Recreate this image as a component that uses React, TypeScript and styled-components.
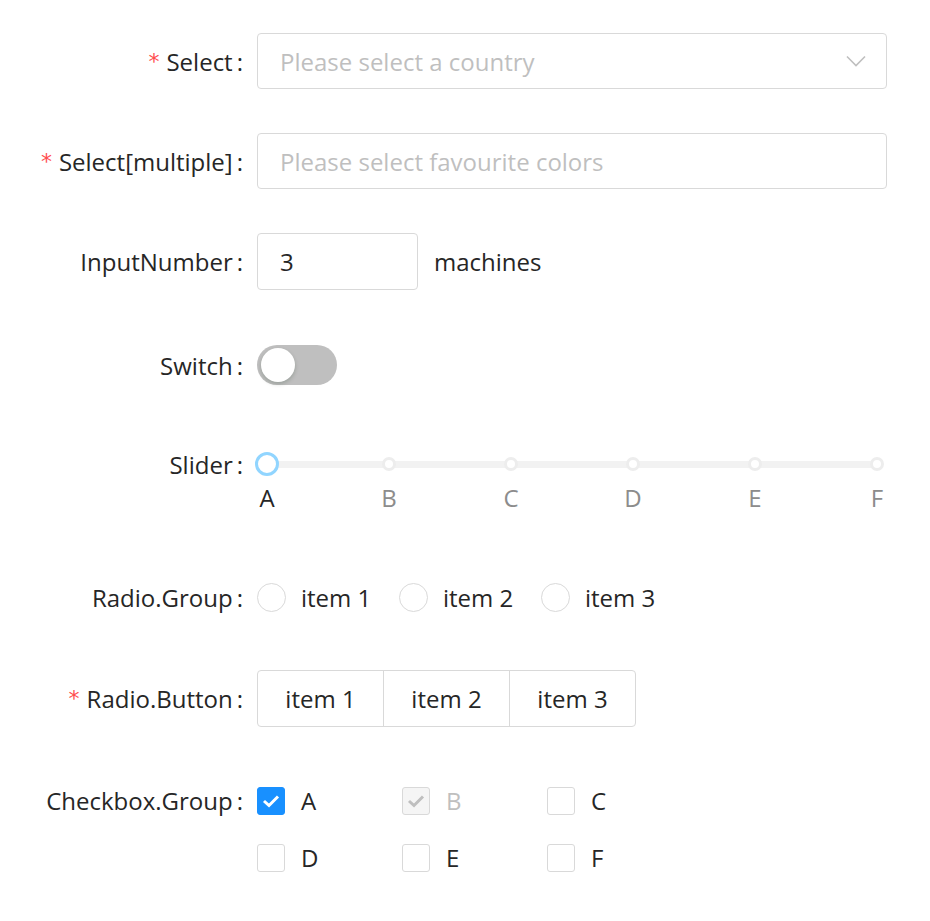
import React from "react";
import styled, { createGlobalStyle } from "styled-components";

const Global = createGlobalStyle`
  html, body { margin: 0; padding: 0; background: #fff; }
  body { font-family: "Open Sans", "Noto Sans", sans-serif; color: #262626; }
`;

const Form = styled.div`
  width: 930px;
  padding-top: 33px;
  font-size: 24px;
`;

const Item = styled.div<{ $mb: number }>`
  display: flex;
  align-items: flex-start;
  margin-bottom: ${(p) => p.$mb}px;
`;

const Label = styled.div`
  width: 257px;
  height: 56px;
  display: flex;
  align-items: center;
  justify-content: flex-end;
  color: #262626;
  white-space: nowrap;
  &::after {
    content: ":";
    margin: 0 14px 0 4px;
  }
`;

const Req = styled.span`
  color: #ff4d4f;
  font-family: "DejaVu Sans", sans-serif;
  font-size: 22px;
  margin-right: 7px;
`;

const Control = styled.div`
  width: 630px;
  min-height: 56px;
  display: flex;
  align-items: center;
`;

const SelectBox = styled.div`
  box-sizing: border-box;
  width: 100%;
  height: 56px;
  border: 1px solid #d9d9d9;
  border-radius: 4px;
  display: flex;
  align-items: center;
  justify-content: space-between;
  padding: 0 20px 0 22px;
`;

const Placeholder = styled.span`
  color: #bfbfbf;
`;

const NumberBox = styled.div`
  box-sizing: border-box;
  width: 161px;
  height: 57px;
  border: 1px solid #d9d9d9;
  border-radius: 4px;
  display: flex;
  align-items: center;
  padding-left: 22px;
`;

const Suffix = styled.span`
  margin-left: 16px;
`;

const SwitchTrack = styled.div`
  position: relative;
  width: 80px;
  height: 40px;
  border-radius: 20px;
  background: #bfbfbf;
`;

const SwitchKnob = styled.div`
  position: absolute;
  left: 4px;
  top: 3px;
  width: 34px;
  height: 34px;
  border-radius: 50%;
  background: #fff;
  box-shadow: 0 2px 4px rgba(0, 35, 11, 0.2);
`;

const SliderWrap = styled.div`
  position: relative;
  width: 610px;
  height: 56px;
  margin: 0 10px;
`;

const Rail = styled.div`
  position: absolute;
  left: 0;
  right: 0;
  top: 25px;
  height: 7px;
  border-radius: 4px;
  background: #f2f2f2;
`;

const Dot = styled.div`
  position: absolute;
  top: 28px;
  width: 14px;
  height: 14px;
  box-sizing: border-box;
  border: 3px solid #ededed;
  border-radius: 50%;
  background: #fff;
  transform: translate(-50%, -50%);
`;

const Handle = styled.div`
  position: absolute;
  left: 0;
  top: 28px;
  width: 24px;
  height: 24px;
  box-sizing: border-box;
  border: 3.5px solid #91d5ff;
  border-radius: 50%;
  background: #fff;
  transform: translate(-50%, -50%);
`;

const Mark = styled.span<{ $active?: boolean }>`
  position: absolute;
  top: 45px;
  transform: translateX(-50%);
  color: ${(p) => (p.$active ? "#262626" : "#8c8c8c")};
  line-height: 1.4;
`;

const RadioRow = styled.div`
  display: flex;
  align-items: center;
`;

const RadioOpt = styled.label`
  display: flex;
  align-items: center;
  width: 142px;
`;

const RadioCircle = styled.span`
  box-sizing: border-box;
  width: 29px;
  height: 29px;
  border: 1px solid #d9d9d9;
  border-radius: 50%;
  margin-right: 15px;
`;

const BtnGroup = styled.div`
  display: flex;
`;

const RadioBtn = styled.div`
  box-sizing: border-box;
  width: 127px;
  height: 57px;
  display: flex;
  align-items: center;
  justify-content: center;
  border: 1px solid #d9d9d9;
  margin-left: -1px;
  &:first-child {
    margin-left: 0;
    border-radius: 4px 0 0 4px;
  }
  &:last-child {
    border-radius: 0 4px 4px 0;
  }
`;

const CheckGrid = styled.div`
  display: grid;
  grid-template-columns: repeat(3, 145px);
  grid-auto-rows: 57px;
  align-items: center;
`;

const CheckOpt = styled.label<{ $disabled?: boolean }>`
  display: flex;
  align-items: center;
  color: ${(p) => (p.$disabled ? "#bfbfbf" : "#262626")};
`;

const Box = styled.span<{ $checked?: boolean; $disabled?: boolean }>`
  box-sizing: border-box;
  width: 28px;
  height: 28px;
  border-radius: 3px;
  margin-right: 16px;
  display: flex;
  align-items: center;
  justify-content: center;
  border: 1px solid
    ${(p) => (p.$checked && !p.$disabled ? "#1890ff" : "#d9d9d9")};
  background: ${(p) =>
    p.$checked ? (p.$disabled ? "#f5f5f5" : "#1890ff") : "#fff"};
`;

const Chevron = () => (
  <svg width="20" height="12" viewBox="0 0 20 12" fill="none">
    <path d="M1 1.5L10 10.5L19 1.5" stroke="#bfbfbf" strokeWidth="1.6" />
  </svg>
);

const Check = ({ color }: { color: string }) => (
  <svg width="18" height="14" viewBox="0 0 18 14" fill="none">
    <path d="M2 7L7 11.5L16 2.5" stroke={color} strokeWidth="3" />
  </svg>
);

const marks = ["A", "B", "C", "D", "E", "F"];
const checks = [
  { l: "A", checked: true },
  { l: "B", checked: true, disabled: true },
  { l: "C" },
  { l: "D" },
  { l: "E" },
  { l: "F" },
];

export default function App() {
  return (
    <>
      <Global />
      <Form>
        <Item $mb={44}>
          <Label>
            <Req>*</Req>Select
          </Label>
          <Control>
            <SelectBox>
              <Placeholder>Please select a country</Placeholder>
              <Chevron />
            </SelectBox>
          </Control>
        </Item>
        <Item $mb={44}>
          <Label>
            <Req>*</Req>Select[multiple]
          </Label>
          <Control>
            <SelectBox>
              <Placeholder>Please select favourite colors</Placeholder>
            </SelectBox>
          </Control>
        </Item>
        <Item $mb={47}>
          <Label>InputNumber</Label>
          <Control>
            <NumberBox>3</NumberBox>
            <Suffix>machines</Suffix>
          </Control>
        </Item>
        <Item $mb={43}>
          <Label>Switch</Label>
          <Control>
            <SwitchTrack>
              <SwitchKnob />
            </SwitchTrack>
          </Control>
        </Item>
        <Item $mb={77}>
          <Label>Slider</Label>
          <Control>
            <SliderWrap>
              <Rail />
              {marks.map((m, i) =>
                i === 0 ? null : (
                  <Dot key={m} style={{ left: `${i * 20}%` }} />
                )
              )}
              <Handle />
              {marks.map((m, i) => (
                <Mark key={m} $active={i === 0} style={{ left: `${i * 20}%` }}>
                  {m}
                </Mark>
              ))}
            </SliderWrap>
          </Control>
        </Item>
        <Item $mb={45}>
          <Label>Radio.Group</Label>
          <Control>
            <RadioRow>
              {["item 1", "item 2", "item 3"].map((t) => (
                <RadioOpt key={t}>
                  <RadioCircle />
                  {t}
                </RadioOpt>
              ))}
            </RadioRow>
          </Control>
        </Item>
        <Item $mb={45}>
          <Label>
            <Req>*</Req>Radio.Button
          </Label>
          <Control>
            <BtnGroup>
              {["item 1", "item 2", "item 3"].map((t) => (
                <RadioBtn key={t}>{t}</RadioBtn>
              ))}
            </BtnGroup>
          </Control>
        </Item>
        <Item $mb={20}>
          <Label>Checkbox.Group</Label>
          <Control>
            <CheckGrid>
              {checks.map((c) => (
                <CheckOpt key={c.l} $disabled={c.disabled}>
                  <Box $checked={c.checked} $disabled={c.disabled}>
                    {c.checked && (
                      <Check color={c.disabled ? "#bfbfbf" : "#fff"} />
                    )}
                  </Box>
                  {c.l}
                </CheckOpt>
              ))}
            </CheckGrid>
          </Control>
        </Item>
      </Form>
    </>
  );
}
